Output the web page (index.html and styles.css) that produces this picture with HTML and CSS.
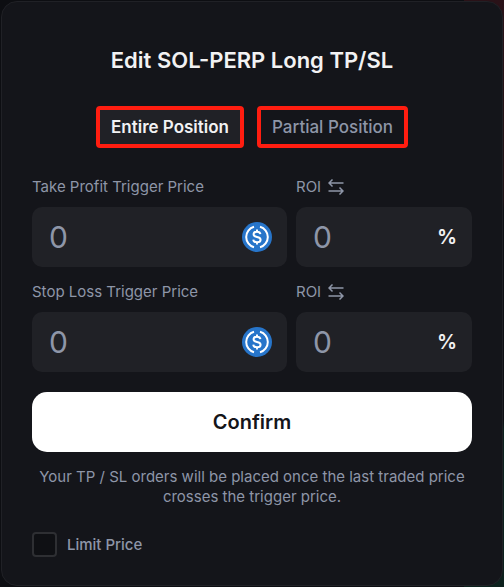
FILE: index.html
```html
<!DOCTYPE html>
<html lang="en">
<head>
  <meta charset="UTF-8" />
  <meta name="viewport" content="width=device-width, initial-scale=1" />
  <title>Edit SOL-PERP Long TP/SL</title>
  <link rel="stylesheet" href="styles.css">
</head>
<body>

  <svg class="sprite" width="0" height="0" aria-hidden="true">
    <symbol id="usdc" viewBox="0 0 30 30">
      <circle cx="15" cy="15" r="15" fill="#2775ca" />
      <path d="M12 4.700a10.700 10.700 0 0 0 0 20.600M18 4.700a10.700 10.700 0 0 1 0 20.600" fill="none" stroke="#fff" stroke-width="2" />
      <path d="M18.400 12.200c-.2-1.600-1.500-2.500-3.400-2.500-2 0-3.400 1-3.400 2.600 0 1.500 1 2.200 3.400 2.600s3.600 1.200 3.600 2.800-1.500 2.600-3.600 2.600c-2.100 0-3.500-1-3.700-2.700M15 7.500v2.200M15 20.300v2.200" fill="none" stroke="#fff" stroke-width="2" />
    </symbol>
    <symbol id="swap" viewBox="0 0 16 16">
      <path d="M15.500 4H1M4.500 0.500 1 4l3.500 3.500M0.500 12H15M11.500 8.500 15 12l-3.500 3.500" fill="none" stroke="currentColor" stroke-width="1.500" />
    </symbol>
  </svg>

  <form class="modal">
    <h1>Edit SOL-PERP Long TP/SL</h1>

    <div class="tabs">
      <button type="button" class="tab active">Entire Position</button>
      <button type="button" class="tab">Partial Position</button>
    </div>

    <div class="row">
      <div class="group">
        <label for="tpPrice">Take Profit Trigger Price</label>
        <div class="field">
          <input type="text" id="tpPrice" placeholder="0">
          <svg class="coin"><use href="#usdc" /></svg>
        </div>
      </div>
      <div class="group">
        <label for="tpRoi">ROI <svg class="swap"><use href="#swap" /></svg></label>
        <div class="field">
          <input type="text" id="tpRoi" placeholder="0">
          <span class="unit">%</span>
        </div>
      </div>
    </div>

    <div class="row">
      <div class="group">
        <label for="slPrice">Stop Loss Trigger Price</label>
        <div class="field">
          <input type="text" id="slPrice" placeholder="0">
          <svg class="coin"><use href="#usdc" /></svg>
        </div>
      </div>
      <div class="group">
        <label for="slRoi">ROI <svg class="swap"><use href="#swap" /></svg></label>
        <div class="field">
          <input type="text" id="slRoi" placeholder="0">
          <span class="unit">%</span>
        </div>
      </div>
    </div>

    <button type="submit" class="confirm">Confirm</button>
    <p class="note">Your TP / SL orders will be placed once the last traded price crosses the trigger price.</p>

    <div class="limit">
      <input type="checkbox" id="limitPrice">
      <label for="limitPrice">Limit Price</label>
    </div>
  </form>

</body>
</html>
```
FILE: styles.css
```css
* {
  box-sizing: border-box;
}
body {
  margin: 0;
  padding: 1px;
  font-family: Inter, 'Liberation Sans', sans-serif;
  color: #8e96a8;
  /* order book tint showing behind the modal */
  background: linear-gradient(#2a1218 0, #1d1014 200px, #0d0e12 210px, #0d0e12 420px, #0c211d 430px) right / 40px 100% no-repeat, #0d0e12;
}
.sprite {
  position: absolute;
}
.modal {
  padding: 44px 30px 28px;
  background: #14151a;
  border: 1px solid #202126;
  border-radius: 16px;
}
h1 {
  margin: 0 0 32px;
  font-size: 22px;
  line-height: 28px;
  font-weight: 600;
  text-align: center;
  color: #f2f2f3;
}
.tabs {
  display: flex;
  justify-content: center;
  gap: 13px;
  margin-bottom: 29px;
}
.tab {
  height: 42px;
  padding: 0 11px;
  font-family: inherit;
  font-size: 17px;
  font-weight: 500;
  color: #8e96a8;
  background: none;
  border: 4px solid #ff1d10;
  border-radius: 4px;
}
.tab.active {
  font-weight: 600;
  color: #f2f2f3;
  background: #202126;
}
.row {
  display: grid;
  grid-template-columns: minmax(0, 1fr) 40%;
  gap: 9px;
  margin-bottom: 15px;
}
.group label {
  display: flex;
  align-items: center;
  gap: 7px;
  margin-bottom: 10px;
  font-size: 15px;
  line-height: 20px;
}
.swap {
  width: 16px;
  height: 16px;
}
.field {
  display: flex;
  align-items: center;
  height: 60px;
  padding: 0 15px 0 17px;
  background: #202126;
  border-radius: 10px;
}
.field input {
  flex: 1;
  min-width: 0;
  padding: 0;
  font-family: inherit;
  font-size: 30px;
  color: #f2f2f3;
  background: none;
  border: none;
  outline: none;
}
.field input::placeholder {
  color: #8e96a8;
}
.coin {
  flex: none;
  width: 30px;
  height: 30px;
}
.unit {
  font-size: 20px;
  font-weight: 600;
  color: #f2f2f3;
}
.confirm {
  width: 100%;
  height: 60px;
  margin-top: 5px;
  font-family: inherit;
  font-size: 20px;
  font-weight: 600;
  color: #14151a;
  background: #fff;
  border: none;
  border-radius: 15px;
}
.note {
  margin: 15px 0 25px;
  font-size: 15px;
  line-height: 20px;
  text-align: center;
}
.limit {
  display: flex;
  align-items: center;
  gap: 10px;
  font-size: 15px;
  font-weight: 500;
}
.limit input {
  appearance: none;
  width: 25px;
  height: 25px;
  margin: 0;
  background: #0f1014;
  border: 2px solid #2e2f33;
  border-radius: 4px;
}
.limit input:checked {
  background: #8e96a8;
}
```
